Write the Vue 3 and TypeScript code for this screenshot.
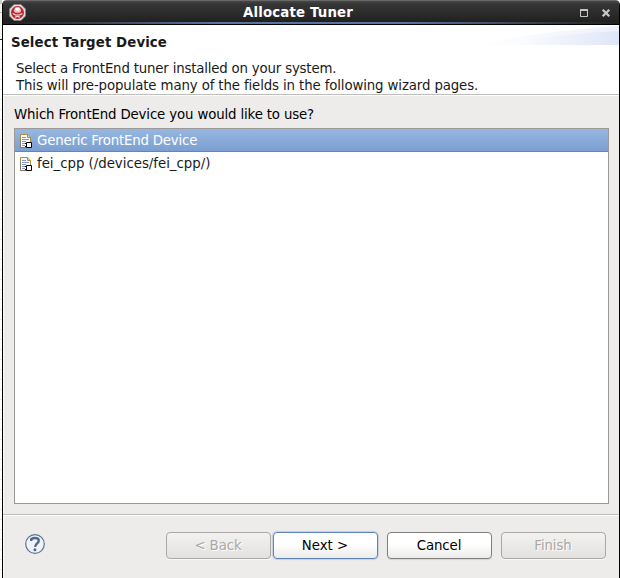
<script setup lang="ts">
import { ref } from 'vue'

interface Device { id: number; label: string; kind: string }
interface Action { label: string; disabled: boolean; primary?: boolean }

const devices: Device[] = [
  { id: 0, label: 'Generic FrontEnd Device', kind: 'generic' },
  { id: 1, label: 'fei_cpp (/devices/fei_cpp/)', kind: 'installed' },
]
const selected = ref(0)
const actions: Action[] = [
  { label: '< Back', disabled: true },
  { label: 'Next >', disabled: false, primary: true },
  { label: 'Cancel', disabled: false },
  { label: 'Finish', disabled: true },
]
</script>

<template>
  <div class="desktop">
    <div class="backdrop"></div>
    <main class="window">
      <header class="titlebar">
        <svg class="app-icon" width="17" height="17" viewBox="0 0 17 17">
          <path d="M5 .5h7L16.500 5v7L12 16.500H5L.5 12V5z" fill="#dedede" stroke="#858585" stroke-width=".8" />
          <circle cx="8.500" cy="8.500" r="6.500" fill="#c5222e" />
          <path d="M5 7.500C5 4.500 6 3 8.500 3S12 4.500 12 7.500L10.500 8.700h-4z" fill="#e9c4c6" />
          <path d="M6.500 4h4v2.500h-4z" fill="#fff" />
          <path d="M3.700 9.500L6.500 11h4l2.800-1.500M6 13.300l2.500-1 2.500 1" fill="none" stroke="#f2e6e6" stroke-width="1.200" />
        </svg>
        <h1>Allocate Tuner</h1>
        <svg class="controls" width="32" height="10" viewBox="0 0 32 10">
          <path d="M.5 1.500h7v7h-7z" fill="none" stroke="#c6c6c6" />
          <path d="M0 2h8" stroke="#c6c6c6" stroke-width="2" />
          <path d="M22.700 1.700l6.600 6.600M29.300 1.700l-6.600 6.600" stroke="#c6c6c6" stroke-width="2.300" />
        </svg>
      </header>
      <section class="banner">
        <svg class="sweep" width="141" height="20" viewBox="0 0 141 20">
          <defs>
            <linearGradient id="g"><stop offset="0" stop-color="#fff" /><stop offset="1" stop-color="#dfe6f8" /></linearGradient>
            <linearGradient id="h"><stop offset="0" stop-color="#fff" /><stop offset="1" stop-color="#edf1fb" /></linearGradient>
          </defs>
          <path d="M0 20Q70 5 141 1V20z" fill="url(#h)" />
          <path d="M25 20Q85 8 141 6V20z" fill="url(#g)" />
        </svg>
        <h2>Select Target Device</h2>
        <p><span class="intro">Select a FrontEnd tuner installed on your system.</span><br />This will pre-populate many of the fields in the following wizard pages.</p>
      </section>
      <section class="body">
        <label>Which FrontEnd Device you would like to use?</label>
        <ul>
          <li v-for="d in devices" :key="d.id" :class="[d.kind, { selected: d.id === selected }]" @click="selected = d.id">
            <svg width="13" height="16" viewBox="0 0 13 16">
              <path d="M.5 1.500H7.500L10.500 4.500V14.500H.5z" fill="#f7faff" stroke="#b18a38" />
              <path d="M.5 6v8.500H6" fill="none" stroke="#88775c" />
              <path d="M7.500 1.500v3h3" fill="#e9d29a" stroke="#b18a38" />
              <path d="M2 4.500h4M2 6.500h7M2 8.500h4M2 10.500h3M2 12.500h3" stroke="#7d98c4" />
              <path d="M6.500 9.500h5v5h-5z" fill="#fff" stroke="#000" />
              <path d="M5 10.500h2M5 13.500h2" stroke="#000" />
            </svg>
            <span>{{ d.label }}</span>
          </li>
        </ul>
      </section>
      <footer>
        <svg class="help" width="20" height="20" viewBox="0 0 20 20">
          <circle cx="10" cy="10" r="9.300" fill="#f0f2f6" stroke="#5c7398" stroke-width="1.200" />
          <path d="M6.200 7V5.200C7.500 4.200 8.600 4 10 4C14.600 4 14.400 7.500 12.500 9C10.800 10.300 10.200 10.700 10.100 12.900" fill="none" stroke="#4f678f" stroke-width="2.400" />
          <circle cx="9.900" cy="15.700" r="1.500" fill="#4f678f" />
        </svg>
        <button v-for="a in actions" :key="a.label" :disabled="a.disabled" :class="{ primary: a.primary }">{{ a.label }}</button>
      </footer>
    </main>
  </div>
</template>

<style>
body { margin: 0; overflow: hidden; }
</style>

<style scoped>
* { box-sizing: border-box; }
.desktop {
  display: grid;
  grid-template-columns: 2px 1fr;
  width: 620px;
  height: 578px;
  font: 13.333px/17px "DejaVu Sans", sans-serif;
  color: #1a1a1a;
}
.backdrop {
  background:
    linear-gradient(#c9d2be 0 4px, #f1f3ec 4px 12px, #b9bbb5 12px 13px, #f4f4f1 13px 39px, #222 39px 40px, transparent 40px),
    repeating-linear-gradient(#fff 0 9px, #dce6f1 9px 10px);
}
.window {
  display: grid;
  grid-template-rows: 25px 71px 418px 64px;
  border: solid #000;
  border-width: 0 1px;
  border-radius: 5px 5px 0 0;
  background: #edeceb;
  box-shadow: inset 1px 0 #f8f8f8;
  overflow: hidden;
}
.titlebar {
  display: grid;
  grid-template-columns: 46px 1fr 72px;
  align-items: center;
  height: 25px;
  border-top: 1px solid #686868;
  border-bottom: 1px solid #000;
  background: linear-gradient(#484848 0, #353535 3px, #2c2c2c 12px, #202020 21px, transparent 21px), linear-gradient(90deg, #202020, #58749d 35%, #58749d 65%, #202020);
}
.app-icon { margin-left: 6px; }
h1 {
  margin: 0;
  text-align: center;
  font-size: 13.333px;
  line-height: 20px;
  letter-spacing: .15px;
  color: #fff;
  white-space: nowrap;
}
.controls { margin-left: 33px; }
.banner {
  position: relative;
  padding: 9px 0 0 8px;
  border-bottom: 1px solid #fff;
  background: linear-gradient(#fff 69px, #bdbcbb 69px);
}
.sweep { position: absolute; top: 0; right: 0; }
h2 { position: relative; margin: 0; font-size: 13.333px; line-height: 17px; letter-spacing: .1px; }
p { margin: 9px 0 0 5px; letter-spacing: -.125px; white-space: nowrap; }
.intro { letter-spacing: -.185px; }
.body { display: flex; flex-direction: column; padding: 10px 10px 10px 11px; }
label { height: 22px; color: #000; letter-spacing: -.145px; white-space: nowrap; }
ul {
  flex: 1;
  margin: 0;
  padding: 0;
  list-style: none;
  border: 1px solid #9c9a98;
  background: #fff;
}
li { display: flex; align-items: center; gap: 4px; height: 23px; padding-left: 5px; white-space: nowrap; }
li svg { margin-top: 1px; }
li.generic { letter-spacing: -.2px; }
li.installed { letter-spacing: -.02px; }
li.selected { color: #fff; background: linear-gradient(#97b7e1, #7b9fd1 22px, #6286ba 22px); }
footer {
  display: flex;
  align-items: flex-start;
  padding: 17px 13px 0 22px;
  border-top: 1px solid #bdbcbb;
  box-shadow: inset 0 1px #fff;
}
.help { margin: 2px 121px 0 0; }
button {
  flex: none;
  width: 105px;
  height: 27px;
  padding: 0 1px 1px 0;
  border: 1px solid #82807e;
  border-radius: 4px;
  color: #000;
  background: linear-gradient(#fff 45%, #ecebea);
  box-shadow: 0 1px 1px #d5d3d1;
  font: inherit;
  letter-spacing: -.1px;
}
button + button { margin-left: 2px; }
button:nth-of-type(n + 3) { margin-left: 9px; }
button.primary { border-color: #5e83b6; box-shadow: 0 0 1px 1px #c4d0e0; letter-spacing: 0; }
button:disabled {
  color: #aaa8a6;
  border-color: #aaa8a7;
  background: linear-gradient(#f3f2f1, #e3e1e0);
  box-shadow: 0 1px #faf9f9;
  text-shadow: 1px 1px #fff;
}
</style>
